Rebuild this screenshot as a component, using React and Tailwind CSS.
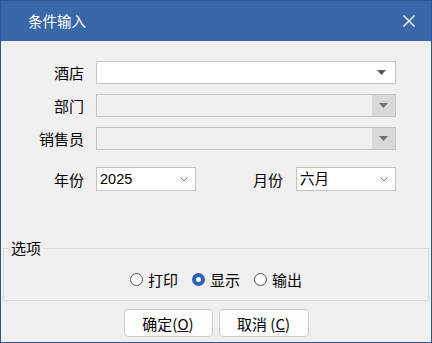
import React from "react";

function Triangle({ color = "#4f5753" }) {
  return (
    <svg width="9" height="5" viewBox="0 0 9 5">
      <polygon points="0,0 9,0 4.5,5" fill={color} />
    </svg>
  );
}

function Chevron() {
  return (
    <svg width="8" height="5" viewBox="0 0 8 5">
      <polyline points="0.5,0.5 4,4 7.5,0.5" fill="none" stroke="#7a7a7a" strokeWidth="1" />
    </svg>
  );
}

function ComboRow({ label, disabled }) {
  return (
    <div className="flex items-center h-[23px]">
      <span className="w-[83px] text-right">{label}</span>
      <div
        className={`ml-[12px] w-[300px] h-[23px] border border-[#c4c4c4] flex ${
          disabled ? "bg-[#f0f0f0]" : "bg-white"
        }`}
      >
        <div className="flex-1" />
        {disabled ? (
          <div className="w-[23px] h-full bg-[#d9d9d9] flex items-center justify-center">
            <Triangle color="#6e7370" />
          </div>
        ) : (
          <div className="w-[23px] h-full flex items-center justify-center pr-[4px]">
            <Triangle />
          </div>
        )}
      </div>
    </div>
  );
}

function Select({ value }) {
  return (
    <div className="w-[100px] h-[24px] border border-[#c4c4c4] bg-white flex items-center pl-[3px] pr-[7px]">
      <span className="flex-1 text-[14.5px] font-['Liberation_Sans','Noto_Sans_CJK_SC',sans-serif] leading-none">
        {value}
      </span>
      <Chevron />
    </div>
  );
}

function Radio({ label, checked }) {
  return (
    <div className="flex items-center">
      {checked ? (
        <span className="w-[13px] h-[13px] rounded-full bg-[#2b63b3] flex items-center justify-center">
          <span className="w-[5px] h-[5px] rounded-full bg-white" />
        </span>
      ) : (
        <span className="w-[13px] h-[13px] rounded-full border border-[#555] bg-white" />
      )}
      <span className="ml-[5px]">{label}</span>
    </div>
  );
}

export default function App() {
  return (
    <div className="w-[432px] h-[343px] flex flex-col border border-[#2c5592] bg-[#f0f0f0] text-black text-[15px] leading-none font-['Noto_Sans_CJK_SC',sans-serif]">
      <div className="h-[40px] shrink-0 bg-[#3a67a8] flex items-center justify-between pl-[27px] pr-[16px] text-white text-[14.5px]">
        <span>条件输入</span>
        <svg width="12" height="12" viewBox="0 0 12 12">
          <path d="M0.5 0.5 L11.5 11.5 M11.5 0.5 L0.5 11.5" stroke="white" strokeWidth="1.3" />
        </svg>
      </div>

      <div className="flex flex-col pt-[20px] gap-[10px]">
        <ComboRow label="酒店" />
        <ComboRow label="部门" disabled />
        <ComboRow label="销售员" disabled />
      </div>

      <div className="flex items-center h-[24px] mt-[17px]">
        <span className="w-[83px] text-right">年份</span>
        <div className="ml-[12px]">
          <Select value="2025" />
        </div>
        <span className="ml-[57px] w-[30px]">月份</span>
        <div className="ml-[13px]">
          <Select value="六月" />
        </div>
      </div>

      <div className="relative mx-[2px] mt-[57px] h-[53px] border border-[#d7d7d7] pt-[20px]">
        <span className="absolute left-[5px] top-[-9px] px-[2px] bg-[#f0f0f0]">选项</span>
        <div className="h-[20px] flex items-center justify-center gap-[14px]">
          <Radio label="打印" />
          <Radio label="显示" checked />
          <Radio label="输出" />
        </div>
      </div>

      <div className="flex justify-center gap-[6px] mt-[8px]">
        <button className="w-[89px] h-[28px] rounded-[4px] border border-[#cbcbcb] bg-[#fdfdfd] flex items-center justify-center">
          确定(<span className="underline">O</span>)
        </button>
        <button className="w-[90px] h-[28px] rounded-[4px] border border-[#cbcbcb] bg-[#fdfdfd] flex items-center justify-center">
          取消 (<span className="underline">C</span>)
        </button>
      </div>
    </div>
  );
}
